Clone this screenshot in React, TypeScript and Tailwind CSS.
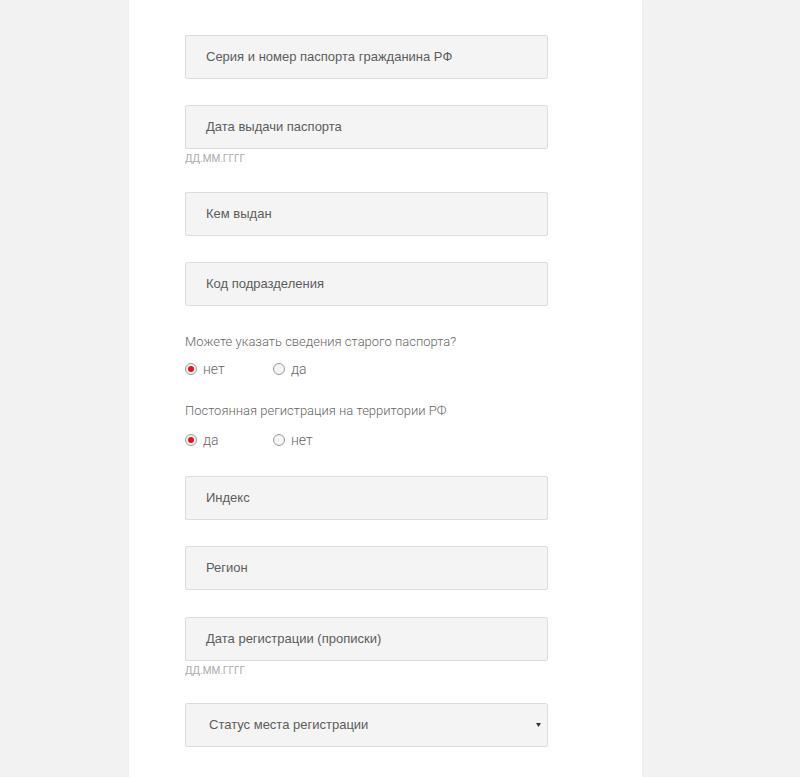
import React from "react";

const inputCls =
  "w-[363px] h-[44px] bg-[#f4f4f4] border border-[#dcdcdc] rounded-[2px] flex items-center pl-[20px] text-[13px] text-[#5c5c5c] font-['Liberation_Sans',Arial,sans-serif]";

function Field({ label, className = "" }: { label: string; className?: string }) {
  return <div className={`${inputCls} ${className}`}>{label}</div>;
}

function Hint() {
  return (
    <div className="mt-[4px] h-[12px] leading-[12px] text-[10px] text-[#aaa] font-['Roboto',sans-serif]">
      ДД.ММ.ГГГГ
    </div>
  );
}

function Radio({ checked, label }: { checked: boolean; label: string }) {
  return (
    <div className="flex items-center gap-[6px] w-[88px]">
      <span className="w-[12px] h-[12px] rounded-full border border-[#9a9a9a] bg-[#f4f4f4] flex items-center justify-center">
        {checked && <span className="w-[6px] h-[6px] rounded-full bg-[#e3151c]" />}
      </span>
      <span className="text-[14px] text-[#666] font-['Roboto',sans-serif] font-light">{label}</span>
    </div>
  );
}

function Label({ text, className = "" }: { text: string; className?: string }) {
  return (
    <div className={`h-[20px] leading-[20px] text-[13px] text-[#666] font-['Roboto',sans-serif] font-light ${className}`}>
      {text}
    </div>
  );
}

export default function App() {
  return (
    <div className="w-[800px] h-[777px] bg-[#f2f2f2] overflow-hidden">
      <div className="ml-[129px] w-[513px] h-[777px] bg-white shadow-[0_0_2px_rgba(0,0,0,0.06)] pl-[56px] pt-[35px]">
        <Field label="Серия и номер паспорта гражданина РФ" />
        <Field label="Дата выдачи паспорта" className="mt-[26px]" />
        <Hint />
        <Field label="Кем выдан" className="mt-[27px]" />
        <Field label="Код подразделения" className="mt-[26px]" />
        <Label text="Можете указать сведения старого паспорта?" className="mt-[26px]" />
        <div className="mt-[7px] h-[20px] flex items-center">
          <Radio checked label="нет" />
          <Radio checked={false} label="да" />
        </div>
        <Label text="Постоянная регистрация на территории РФ" className="mt-[22px]" />
        <div className="mt-[9px] h-[20px] flex items-center">
          <Radio checked label="да" />
          <Radio checked={false} label="нет" />
        </div>
        <Field label="Индекс" className="mt-[26px]" />
        <Field label="Регион" className="mt-[26px]" />
        <Field label="Дата регистрации (прописки)" className="mt-[27px]" />
        <Hint />
        <div className={`${inputCls} mt-[26px] pl-[23px] pr-[6px] justify-between`}>
          <span>Статус места регистрации</span>
          <svg width="5" height="4" viewBox="0 0 5 4">
            <path d="M0 0h5L2.5 4z" fill="#333" />
          </svg>
        </div>
      </div>
    </div>
  );
}
